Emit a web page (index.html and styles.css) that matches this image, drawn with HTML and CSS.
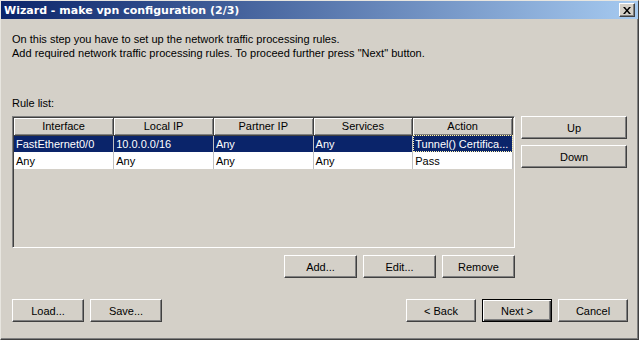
FILE: index.html
```html
<!DOCTYPE html>
<html lang="en">
<head>
    <meta charset="UTF-8">
    <title>Wizard - make vpn configuration (2/3)</title>
    <link rel="stylesheet" href="styles.css">
</head>
<body>
    <div class="window">
        <div class="title-bar">
            <span class="title">Wizard - make vpn configuration (2/3)</span>
            <button class="close-btn" title="Close">
                <svg width="8" height="7" viewBox="0 0 8 7">
                    <path d="M0 0h2l2 2.5L6 0h2L5 3.5 8 7H6L4 4.5 2 7H0l3-3.5z" fill="#000"/>
                </svg>
            </button>
        </div>

        <div class="content">
            <p class="intro">
                On this step you have to set up the network traffic processing rules.<br>
                Add required network traffic processing rules. To proceed further press "Next" button.
            </p>

            <div class="label">Rule list:</div>

            <div class="rules-area">
                <div class="list-box">
                    <table class="rule-table">
                        <thead>
                            <tr>
                                <th>Interface</th>
                                <th>Local IP</th>
                                <th>Partner IP</th>
                                <th>Services</th>
                                <th>Action</th>
                            </tr>
                        </thead>
                        <tbody>
                            <tr class="selected">
                                <td>FastEthernet0/0</td>
                                <td>10.0.0.0/16</td>
                                <td>Any</td>
                                <td>Any</td>
                                <td class="focused">Tunnel() Certifica...</td>
                            </tr>
                            <tr>
                                <td>Any</td>
                                <td>Any</td>
                                <td>Any</td>
                                <td>Any</td>
                                <td>Pass</td>
                            </tr>
                        </tbody>
                    </table>
                </div>
                <div class="side-buttons">
                    <button class="btn btn-wide">Up</button>
                    <button class="btn btn-wide">Down</button>
                </div>
            </div>

            <div class="edit-buttons">
                <button class="btn btn-edit">Add...</button>
                <button class="btn btn-edit">Edit...</button>
                <button class="btn btn-edit">Remove</button>
            </div>

            <div class="footer">
                <div class="footer-left">
                    <button class="btn btn-file">Load...</button>
                    <button class="btn btn-file">Save...</button>
                </div>
                <div class="footer-right">
                    <button class="btn btn-nav">&lt; Back</button>
                    <button class="btn btn-nav btn-default">Next &gt;</button>
                    <button class="btn btn-nav">Cancel</button>
                </div>
            </div>
        </div>
    </div>
</body>
</html>
```

FILE: styles.css
```css
body {
    margin: 0;
    background: #d4d0c8;
    font-family: "Liberation Sans", Arial, sans-serif;
    font-size: 11px;
    color: #000;
}

.window {
    width: 639px;
    height: 340px;
    box-sizing: border-box;
    background: #d4d0c8;
    border-top: 1px solid #e8e6e0;
    border-left: 1px solid #e8e6e0;
    border-right: 1px solid #404040;
    border-bottom: 1px solid #404040;
    box-shadow: inset -1px -1px #808080;
    display: flex;
    flex-direction: column;
}

/* title bar */
.title-bar {
    height: 18px;
    background: linear-gradient(to right, #0a246a, #a6caf0);
    display: flex;
    align-items: center;
    justify-content: space-between;
    padding: 0 3px 0 3px;
}

.title {
    color: #fff;
    font-weight: bold;
    font-size: 11px;
    font-family: "DejaVu Sans", Verdana, sans-serif;
}

.close-btn {
    width: 16px;
    height: 14px;
    padding: 0;
    background: #d4d0c8;
    border: 1px solid;
    border-color: #fff #404040 #404040 #fff;
    box-shadow: inset -1px -1px #808080;
    display: flex;
    align-items: center;
    justify-content: center;
}

/* body */
.content {
    flex: 1;
    padding: 0 10px 0 11px;
    display: flex;
    flex-direction: column;
}

.intro {
    margin: 13px 0 0;
    line-height: 14px;
}

.label {
    margin-top: 36px;
    line-height: 14px;
}

.rules-area {
    margin-top: 6px;
    display: flex;
    gap: 6px;
}

.list-box {
    width: 503px;
    height: 132px;
    box-sizing: border-box;
    border: 1px solid;
    border-color: #808080 #fff #fff #808080;
    box-shadow: inset 1px 1px #404040, inset -1px -1px #d4d0c8;
    padding: 1px;
    background: #d4d0c8;
}

.rule-table {
    width: 499px;
    border-collapse: collapse;
    table-layout: fixed;
}

.rule-table th {
    height: 17px;
    box-sizing: border-box;
    padding: 0;
    font-weight: normal;
    text-align: center;
    background: #d4d0c8;
    border-right: 1px solid #404040;
    border-bottom: 1px solid #404040;
    box-shadow: inset 1px 1px #fff, inset -1px -1px #808080;
}

.rule-table td {
    height: 17px;
    box-sizing: border-box;
    padding: 0 2px;
    background: #fff;
    border-right: 1px solid #c0c0c0;
    white-space: nowrap;
    overflow: hidden;
}

.rule-table tr.selected td {
    background: #0a246a;
    color: #fff;
}

.rule-table td.focused {
    outline: 1px dotted #fff5b0;
    outline-offset: -1px;
}

.side-buttons {
    display: flex;
    flex-direction: column;
    gap: 6px;
}

/* buttons */
.btn {
    height: 23px;
    box-sizing: border-box;
    padding: 0;
    font-family: "Liberation Sans", Arial, sans-serif;
    font-size: 11px;
    color: #000;
    background: #d4d0c8;
    border: 1px solid;
    border-color: #fff #404040 #404040 #fff;
    box-shadow: inset -1px -1px #808080;
}

.btn-wide {
    width: 106px;
}

.btn-edit {
    width: 73px;
}

.btn-file {
    width: 72px;
}

.btn-nav {
    width: 70px;
}

.btn-default {
    border: 1px solid #000;
    box-shadow: inset 1px 1px #fff, inset -1px -1px #404040, inset -2px -2px #808080;
}

.edit-buttons {
    margin-top: 7px;
    width: 503px;
    display: flex;
    justify-content: flex-end;
    gap: 6px;
}

.footer {
    margin-top: 21px;
    display: flex;
    justify-content: space-between;
}

.footer-left,
.footer-right {
    display: flex;
    gap: 6px;
}
```
